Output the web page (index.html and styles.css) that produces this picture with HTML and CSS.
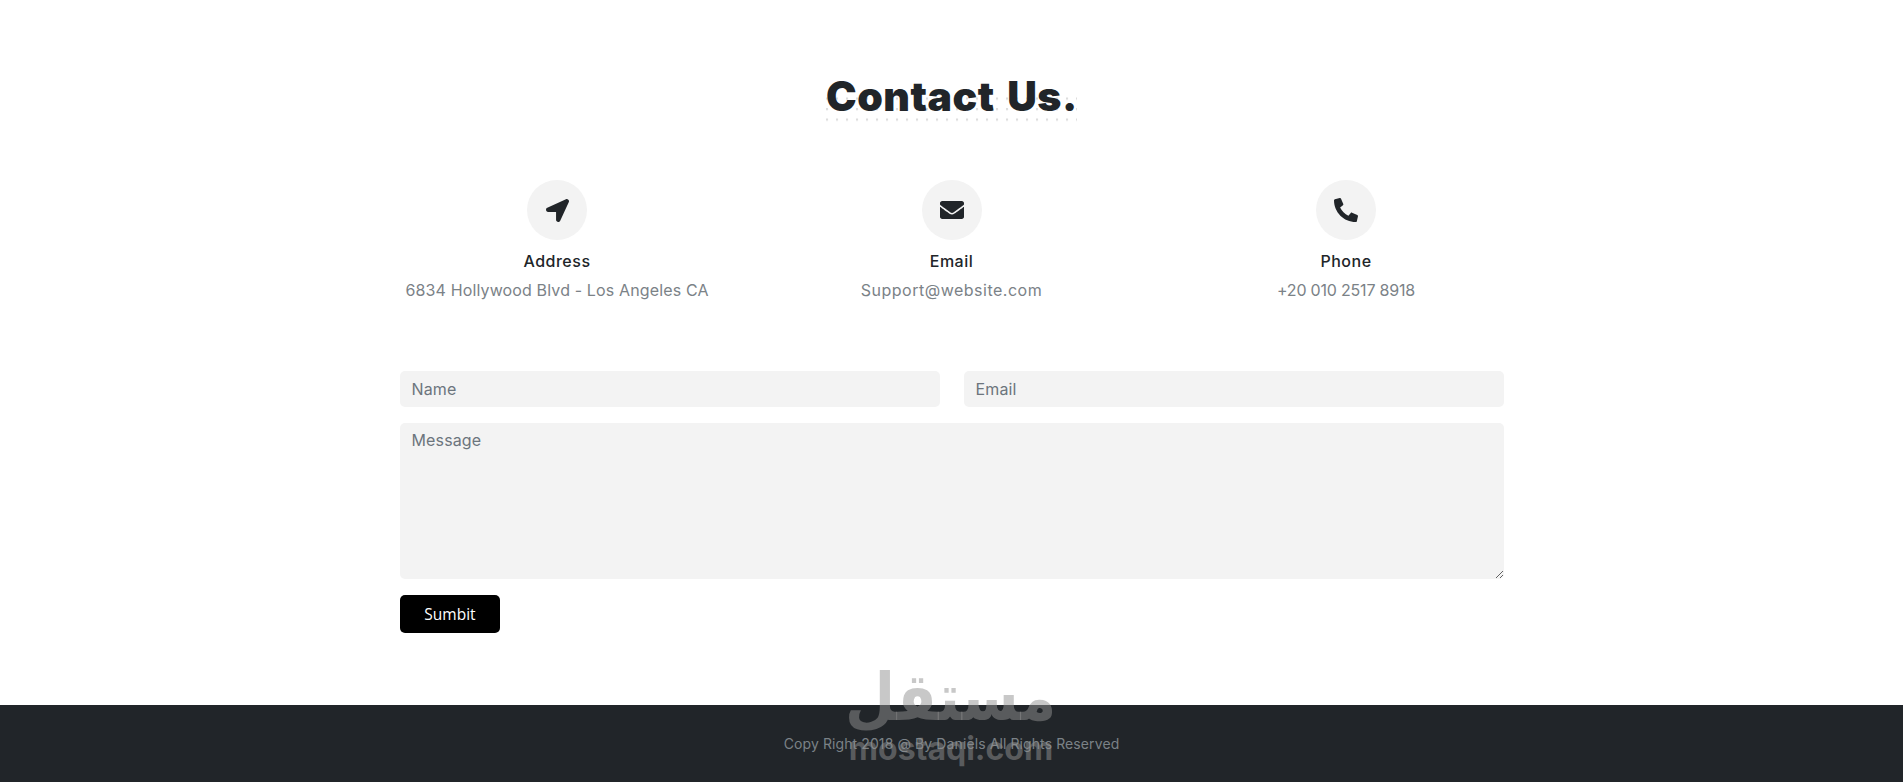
FILE: index.html
```html
<!DOCTYPE html>
<html lang="en">
<head>
	<meta charset="UTF-8">
	<title>Contact Us</title>
	<link rel="stylesheet" href="styles.css">
</head>
<body>
	<section class="contact">
		<h2 class="title">Contact Us.</h2>
		<div class="info">
			<div class="item">
				<div class="icon">
					<svg viewBox="0 0 512 512" width="23" height="23"><path d="M444.52 3.52L28.74 195.42c-47.97 22.39-31.98 92.75 19.19 92.75h175.91v175.91c0 51.17 70.36 67.17 92.75 19.19l191.9-415.78c15.99-38.39-25.59-79.97-63.97-63.97z" fill="#212529"/></svg>
				</div>
				<h4>Address</h4>
				<p>6834 Hollywood Blvd - Los Angeles CA</p>
			</div>
			<div class="item">
				<div class="icon">
					<svg viewBox="0 0 512 512" width="24" height="24"><path d="M502.3 190.8c3.9-3.1 9.7-.2 9.7 4.7V400c0 26.5-21.5 48-48 48H48c-26.5 0-48-21.5-48-48V195.6c0-5 5.7-7.8 9.7-4.7 22.4 17.4 52.1 39.5 154.1 113.6 21.1 15.4 56.7 47.8 92.2 47.6 35.7.3 72-32.8 92.3-47.6 102-74.1 131.6-96.3 154-113.700zM256 320c23.2.4 56.6-29.2 73.4-41.4 132.7-96.3 142.8-104.7 173.4-128.7 5.8-4.5 9.2-11.5 9.2-18.9v-19c0-26.5-21.5-48-48-48H48C21.5 64 0 85.5 0 112v19c0 7.4 3.4 14.3 9.2 18.9 30.6 23.9 40.7 32.4 173.4 128.7 16.8 12.2 50.2 41.8 73.4 41.4z" fill="#212529"/></svg>
				</div>
				<h4>Email</h4>
				<p class="mail">Support@website.com</p>
			</div>
			<div class="item">
				<div class="icon">
					<svg viewBox="0 0 512 512" width="24" height="24"><path transform="translate(512 0) scale(-1 1)" d="M493.4 24.6l-104-24c-11.3-2.6-22.9 3.3-27.5 13.9l-48 112c-4.2 9.8-1.4 21.3 6.9 28l60.6 49.6c-36 76.7-98.9 140.5-177.2 177.2l-49.6-60.6c-6.8-8.3-18.2-11.1-28-6.9l-112 48C3.9 366.5-2 378.1.6 389.4l24 104C27.1 504.2 36.7 512 48 512c256.1 0 464-207.5 464-464 0-11.200-7.700-20.900-18.600-23.400z" fill="#212529"/></svg>
				</div>
				<h4>Phone</h4>
				<p class="tel">+20 010 2517 8918</p>
			</div>
		</div>
		<form class="form">
			<div class="row">
				<input type="text" placeholder="Name">
				<input type="text" placeholder="Email">
			</div>
			<textarea placeholder="Message"></textarea>
			<button type="button" class="btn">Sumbit</button>
		</form>
	</section>
	<footer class="footer">Copy Right 2018 @ By Daniels All Rights Reserved</footer>
	<div class="mark">
		<span class="mark-ar">مستقل</span>
		<span class="mark-en">mostaqi.com</span>
	</div>
</body>
</html>
```

FILE: styles.css
```css
*{
	margin: 0;
	padding: 0;
	box-sizing: border-box;
}
html,body{
	height: 100%;
	overflow: hidden;
}
body{
	font-family: "Inter", "Liberation Sans", sans-serif;
	background: #fff;
	color: #212529;
	display: flex;
	flex-direction: column;
	position: relative;
}
.contact{
	width: 1103px;
	height: 705px;
	margin: 0 auto;
	padding-top: 72px;
}
.title{
	position: relative;
	z-index: 0;
	width: 251px;
	height: 49px;
	margin: 0 auto;
	font-size: 41px;
	font-weight: 900;
	line-height: 48px;
	letter-spacing: .5px;
	word-spacing: 4px;
	white-space: nowrap;
	text-align: center;
}
/* dots behind the heading */
.title::before{
	content: "";
	position: absolute;
	z-index: -1;
	left: 0;
	right: 0;
	bottom: -8px;
	height: 32px;
	background-image: radial-gradient(circle at 1px 1px, #ddd 1.2px, transparent 1.6px);
	background-size: 10px 10.5px;
	background-position: left bottom;
}
.info{
	display: flex;
	justify-content: space-between;
	margin-top: 59px;
}
.item{
	width: 314px;
	display: flex;
	flex-direction: column;
	align-items: center;
}
.icon{
	width: 60px;
	height: 60px;
	border-radius: 50%;
	background: #f3f3f3;
	display: flex;
	align-items: center;
	justify-content: center;
}
.item h4{
	margin-top: 9px;
	font-size: 16px;
	font-weight: 500;
	line-height: 24px;
	letter-spacing: .5px;
}
.item p{
	margin-top: 5px;
	font-size: 16px;
	line-height: 24px;
	letter-spacing: .14px;
	color: #7b8287;
	white-space: nowrap;
}
.item .mail{
	letter-spacing: .5px;
}
.item .tel{
	letter-spacing: -.2px;
}
.form{
	margin-top: 69px;
	margin-right: -1px;
}
.row{
	display: flex;
	gap: 24px;
}
input,textarea{
	display: block;
	width: 100%;
	border: 0;
	outline: 0;
	border-radius: 5px;
	background: #f3f3f3;
	font-family: "Inter", "Liberation Sans", sans-serif;
	font-size: 16px;
	letter-spacing: .14px;
	color: #212529;
	padding: 0 11.500px;
}
input::placeholder,textarea::placeholder{
	color: #6c757d;
	opacity: 1;
}
input{
	height: 36px;
}
textarea{
	height: 156px;
	margin-top: 16px;
	padding-top: 7px;
}
.btn{
	display: block;
	width: 100px;
	height: 38px;
	margin-top: 16px;
	border: 0;
	border-radius: 5px;
	background: #000;
	color: #fff;
	font-family: "Open Sans", "Liberation Sans", sans-serif;
	font-size: 15.5px;
}
.footer{
	height: 77px;
	background: #212529;
	color: #7b8287;
	font-size: 14px;
	letter-spacing: .1px;
	text-align: center;
	padding-top: 29px;
	line-height: 20px;
}
.mark{
	position: absolute;
	left: 846px;
	top: 660px;
	width: 210px;
	display: flex;
	flex-direction: column;
	align-items: center;
	color: rgba(145,145,145,.5);
	font-weight: 700;
	pointer-events: none;
}
.mark-ar{
	font-family: "DejaVu Sans", sans-serif;
	font-size: 66px;
	line-height: 76px;
	transform: scaleX(.875);
}
.mark-en{
	font-size: 32px;
	line-height: 26px;
}
```
